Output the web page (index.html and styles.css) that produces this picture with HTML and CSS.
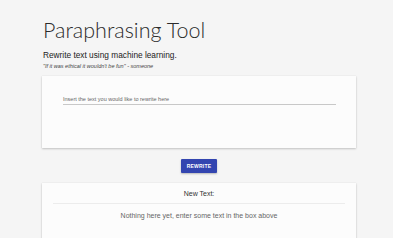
FILE: index.html
```html
<!DOCTYPE html>
<html lang="en">
<head>
    <meta charset="UTF-8">
    <meta name="viewport" content="width=device-width, initial-scale=1.0">
    <title>Paraphrasing Tool</title>
    <link rel="stylesheet" href="styles.css">
</head>
<body>
    <div class="container">
        <h1>Paraphrasing Tool</h1>
        <p class="subtitle">Rewrite text using machine learning.</p>
        <p class="quote">"If it was ethical it wouldn't be fun" - someone</p>

        <div class="card input-card">
            <div class="field">Insert the text you would like to rewrite here</div>
        </div>

        <div class="actions">
            <button class="rewrite">Rewrite</button>
        </div>

        <div class="card output-card">
            <div class="output-title">New Text:</div>
            <div class="output-body">Nothing here yet, enter some text in the box above</div>
        </div>
    </div>
</body>
</html>
```

FILE: styles.css
```css
:root {
    --background-color: #f5f5f5;
    --card-color: #fcfcfc;
    --text-color: #333;
    --primary-color: #3345b0;
}

body {
    margin: 0;
    background-color: var(--background-color);
    color: var(--text-color);
    font-family: "Liberation Sans", Arial, sans-serif;
    overflow: hidden;
}

.container {
    width: 314px;
    margin-left: 42px;
}

h1 {
    margin: 17px 0 0 1px;
    font-family: Lato, "Liberation Sans", sans-serif;
    font-size: 21.5px;
    line-height: 26px;
    font-weight: 300;
    color: #2b2b2b;
}

.subtitle {
    margin: 6px 0 0 1px;
    font-size: 8.3px;
    line-height: 12px;
    color: #222;
}

.quote {
    margin: 1px 0 0 1px;
    font-size: 5.5px;
    line-height: 8px;
    font-style: italic;
    color: #444;
}

.card {
    background: var(--card-color);
    box-shadow: 0 1px 2px rgba(0, 0, 0, 0.2), 0 0 1px rgba(0, 0, 0, 0.1);
}

.input-card {
    margin-top: 6px;
    height: 72px;
    padding: 19px 20px 0 21px;
    box-sizing: border-box;
}

.field {
    font-size: 5.5px;
    line-height: 8px;
    color: #666;
    padding-bottom: 1px;
    border-bottom: 1px solid #c8c8c8;
}

.actions {
    display: flex;
    justify-content: center;
    margin-top: 11px;
}

button.rewrite {
    width: 36px;
    height: 14px;
    padding: 0;
    border: none;
    border-radius: 1px;
    background-color: var(--primary-color);
    color: white;
    font-family: inherit;
    font-size: 5px;
    font-weight: bold;
    text-transform: uppercase;
    letter-spacing: 0.2px;
    box-shadow: 0 1px 2px rgba(0, 0, 0, 0.25);
    cursor: pointer;
}

.output-card {
    margin-top: 10px;
    height: 80px;
    padding: 0 11px;
    text-align: center;
}

.output-title {
    padding-top: 7px;
    padding-bottom: 5px;
    font-size: 7px;
    line-height: 8px;
    color: #333;
    border-bottom: 1px solid #ececec;
}

.output-body {
    margin-top: 7px;
    font-size: 7px;
    line-height: 9px;
    color: #666;
}
```
